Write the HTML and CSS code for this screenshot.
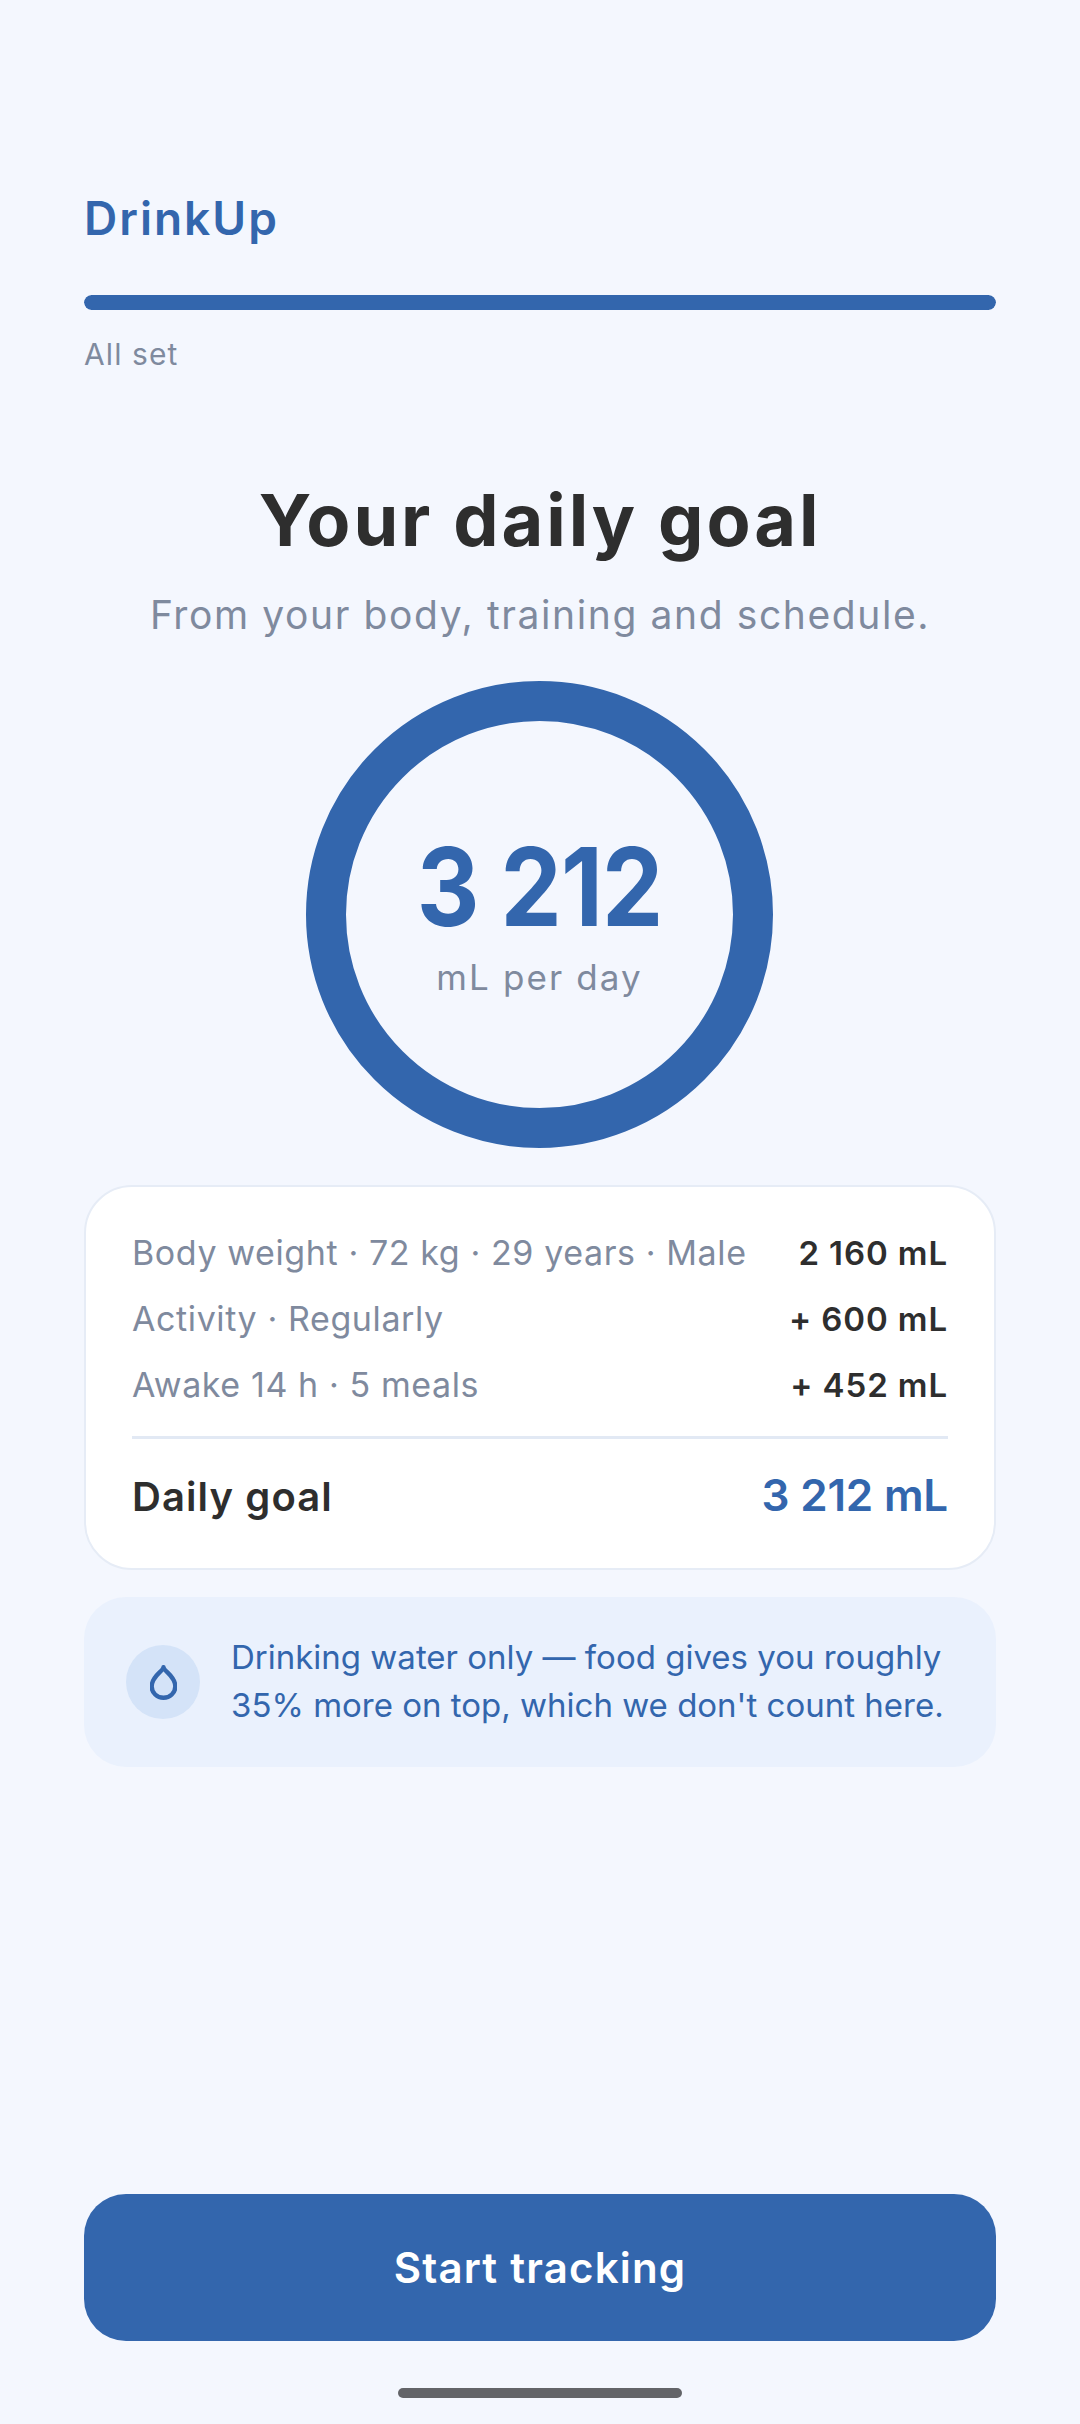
FILE: index.html
```html
<!DOCTYPE html>
<html lang="en">
<head>
<meta charset="utf-8">
<title>DrinkUp</title>
<link rel="stylesheet" href="styles.css">
</head>
<body>
<main class="screen">
  <header class="top">
    <div class="brand">DrinkUp</div>
    <div class="progress"><div class="progress-fill"></div></div>
    <div class="step">All set</div>
  </header>
  <h1 class="title">Your daily goal</h1>
  <p class="subtitle">From your body, training and schedule.</p>
  <div class="ring">
    <div class="ring-value">3 212</div>
    <div class="ring-unit">mL per day</div>
  </div>
  <section class="card">
    <div class="row"><span class="row-label">Body weight · 72 kg · 29 years · Male</span><span class="row-value">2 160 mL</span></div>
    <div class="row"><span class="row-label">Activity · Regularly</span><span class="row-value">+ 600 mL</span></div>
    <div class="row"><span class="row-label">Awake 14 h · 5 meals</span><span class="row-value">+ 452 mL</span></div>
    <div class="divider"></div>
    <div class="total"><span class="total-label">Daily goal</span><span class="total-value">3 212 mL</span></div>
  </section>
  <section class="info">
    <div class="info-icon">
      <svg class="drop" width="27" height="35" viewBox="0 0 27 35" fill="none" stroke="currentColor" stroke-width="4.4" stroke-linejoin="round"><path d="M13.5 2.2C14 6.5 25.3 11 25.3 21.5A11.8 11.3 0 0 1 1.7 21.5C1.7 11 13 6.5 13.5 2.2Z"/></svg>
    </div>
    <p class="info-text">Drinking water only — food gives you roughly<br>35% more on top, which we don't count here.</p>
  </section>
  <button class="cta">Start tracking</button>
  <div class="home"></div>
</main>
</body>
</html>
```
FILE: styles.css
```css
* { box-sizing: border-box; }
html, body { margin: 0; padding: 0; }
body {
  background: #f4f7fe;
  font-family: Inter, "Open Sans", sans-serif;
}
.screen {
  width: 1080px;
  height: 2424px;
  padding: 188px 84px 26px;
  display: flex;
  flex-direction: column;
  background: #f4f7fe;
}
.brand {
  font-size: 46px;
  line-height: 60px;
  font-weight: 600;
  letter-spacing: 2px;
  color: #3366ad;
}
.progress {
  margin-top: 47px;
  height: 15px;
  border-radius: 8px;
  background: #dfe8f5;
  overflow: hidden;
}
.progress-fill { height: 100%; width: 100%; background: #3366ad; border-radius: 8px; }
.step {
  margin-top: 24px;
  font-size: 30px;
  line-height: 40px;
  letter-spacing: 1.1px;
  color: #7f8a9e;
}
.title {
  margin: 102px 0 0;
  font-size: 72px;
  line-height: 88px;
  font-weight: 700;
  letter-spacing: 2.9px;
  color: #2e2e2e;
  text-align: center;
}
.subtitle {
  margin: 27px 0 0;
  font-size: 39px;
  line-height: 48px;
  letter-spacing: 1.6px;
  color: #7f8a9e;
  text-align: center;
}
.ring {
  margin: 42px 0 0 222px;
  align-self: flex-start;
  width: 467px;
  height: 467px;
  padding-bottom: 3px;
  border: 40px solid #3366ad;
  border-radius: 50%;
  display: flex;
  flex-direction: column;
  align-items: center;
  justify-content: center;
}
.ring-value {
  font-size: 108px;
  line-height: 120px;
  font-weight: 700;
  letter-spacing: -1px;
  transform: scaleX(0.9);
  color: #3366ad;
}
.ring-unit {
  margin-top: 8px;
  font-size: 35px;
  line-height: 44px;
  letter-spacing: 2.1px;
  color: #7f8a9e;
}
.card {
  margin-top: 37px;
  height: 385px;
  padding: 33px 46px 0;
  background: #fff;
  border: 2px solid #e6ecf6;
  border-radius: 48px;
}
.row {
  display: flex;
  justify-content: space-between;
  align-items: baseline;
  height: 66px;
  line-height: 66px;
  font-size: 33px;
}
.row-label { font-size: 34px; color: #7f8a9e; letter-spacing: 0.6px; }
.row-value { font-weight: 600; color: #2e2e2e; letter-spacing: 0.9px; }
.divider { margin-top: 18px; height: 3px; background: #e2e9f4; }
.total {
  margin-top: 26px;
  display: flex;
  justify-content: space-between;
  align-items: baseline;
  line-height: 60px;
  font-weight: 600;
}
.total-label { font-size: 40px; letter-spacing: 1.1px; color: #2e2e2e; }
.total-value { font-size: 44px; letter-spacing: -0.2px; color: #3366ad; }
.info {
  margin-top: 27px;
  height: 170px;
  padding: 0 42px;
  display: flex;
  align-items: center;
  gap: 31px;
  background: #eaf1fd;
  border-radius: 42px;
}
.info-icon {
  width: 74px;
  height: 74px;
  flex: none;
  border-radius: 50%;
  background: #d4e3f8;
  color: #3366ad;
  display: flex;
  align-items: center;
  justify-content: center;
}
.drop { display: block; }
.info-text {
  margin: 0;
  padding-bottom: 2px;
  font-size: 33px;
  line-height: 48px;
  color: #3366ad;
  white-space: nowrap;
}
.cta {
  margin-top: auto;
  height: 147px;
  border: 0;
  border-radius: 42px;
  background: #3366ad;
  color: #fff;
  font: inherit;
  font-size: 42px;
  font-weight: 600;
  letter-spacing: 1.2px;
}
.home {
  margin: 47px auto 0;
  width: 284px;
  height: 10px;
  border-radius: 5px;
  background: #636468;
}
```
